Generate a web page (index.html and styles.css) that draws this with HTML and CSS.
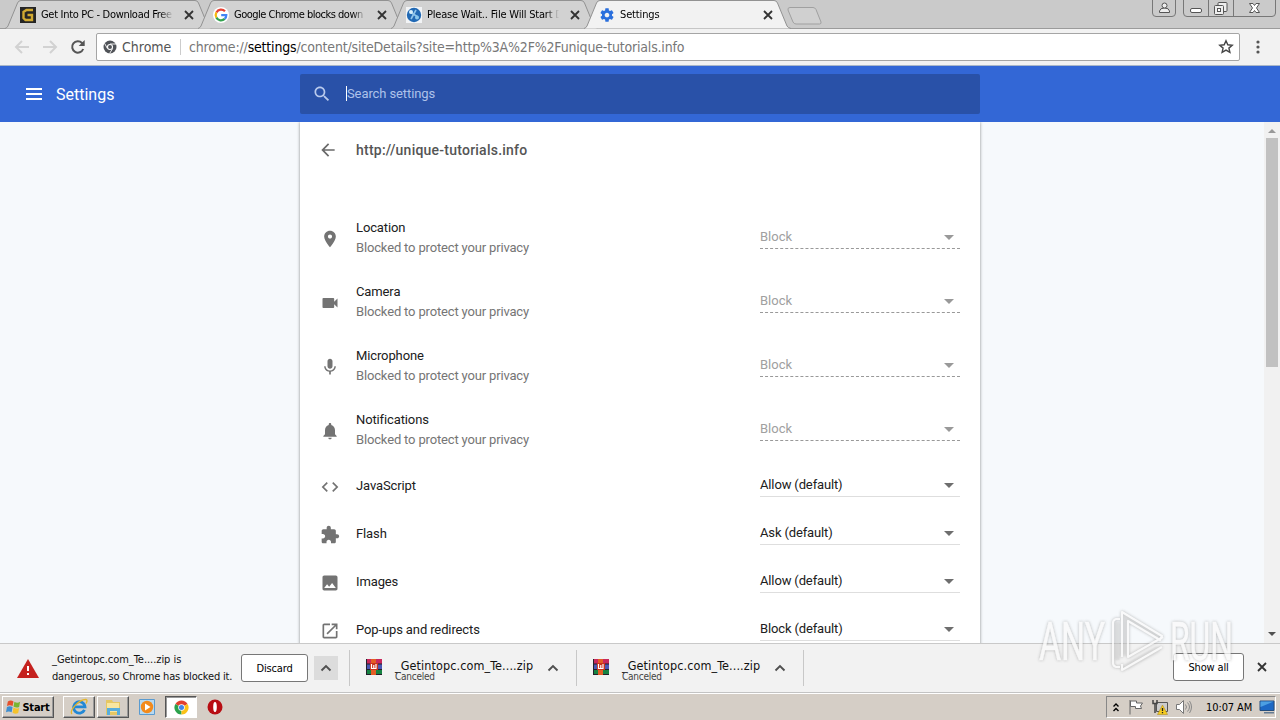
FILE: index.html
```html
<!DOCTYPE html>
<html lang="en">

<head>
    <meta charset="UTF-8" />
    <meta name="viewport" content="width=device-width, initial-scale=1.0" />
    <title>Settings</title>
    <link rel="stylesheet" href="styles.css">
</head>

<body>
    <svg class="defs" width="0" height="0">
        <symbol id="close" viewBox="0 0 10 10">
            <path d="M1 1l8 8M9 1l-8 8" fill="none" stroke="currentColor" stroke-width="1.8" />
        </symbol>
        <symbol id="up" viewBox="0 0 12 8">
            <path d="M1.5 6.5L6 2l4.5 4.5" fill="none" stroke="#505050" stroke-width="1.9" />
        </symbol>
        <symbol id="tab-shape" viewBox="0 0 208 29">
            <path d="M0 28.500Q2 28 3 26L12.500 3Q13.500 .5 16 .5H190Q192.500 .5 193.500 3L203 26Q204 28 207 28.500" stroke="#929292" />
        </symbol>
        <symbol id="winrar" viewBox="0 0 16 16">
            <path fill="#c9285c" d="M0 0h16v5H0z" />
            <path fill="#4b58b5" d="M0 5h16v6H0z" />
            <path fill="#168242" d="M0 11h16v5H0z" />
            <path fill="#23202b" d="M0 4.500h16v1H0zM0 10h16v1H0zM0 15h16v1H0zM0 0h1v16H0z" />
            <path fill="#e45d25" d="M5 0h5v16H5z" />
            <path fill="#c8331d" d="M4 4h8v7H4z" />
            <path d="M5.500 5v4.500h4.500V5M7.800 6v3" fill="none" stroke="#fff" stroke-width="1.2" />
        </symbol>
    </svg>

    <div class="window">
        <div class="tabs">
            <div class="tab">
                <svg class="shape"><use href="#tab-shape" /></svg>
                <svg class="favicon" viewBox="0 0 16 16">
                    <path fill="#252525" d="M0 0h16v16H0z" />
                    <path d="M13 3H6.500L3.500 5v6l2 2H12V8H7.500" fill="none" stroke="#d1a931" stroke-width="2.400" />
                </svg>
                <span class="tab-title t1">Get Into PC - Download Free</span>
                <svg class="x"><use href="#close" /></svg>
            </div>
            <div class="tab">
                <svg class="shape"><use href="#tab-shape" /></svg>
                <svg class="favicon" viewBox="0 0 16 16">
                    <circle cx="8" cy="8" r="8" fill="#fff" />
                    <g fill="none" stroke-width="2.200">
                        <path d="M12 4.300A5.300 5.300 0 0 0 3.400 5.400" stroke="#e64335" />
                        <path d="M3.400 5.400a5.300 5.300 0 0 0 0 5.200" stroke="#f6b90c" />
                        <path d="M3.400 10.600a5.300 5.300 0 0 0 8.300 1.300" stroke="#34a350" />
                        <path d="M11.700 11.900A5.300 5.300 0 0 0 13.300 8.200H8.200" stroke="#4285f4" />
                    </g>
                </svg>
                <span class="tab-title t2">Google Chrome blocks down</span>
                <svg class="x"><use href="#close" /></svg>
            </div>
            <div class="tab">
                <svg class="shape"><use href="#tab-shape" /></svg>
                <svg class="favicon" viewBox="0 0 16 16">
                    <path fill="#f2f4f6" d="M0 0h16v16H0z" />
                    <circle cx="8" cy="8" r="7.200" fill="#2169b4" />
                    <path d="M4 5l8 5M10 3L5 12" stroke="#8fc4ea" stroke-width="1.600" />
                    <circle cx="5" cy="5" r="2" fill="#d7effa" />
                    <circle cx="11" cy="10.500" r="2" fill="#8bc7eb" />
                </svg>
                <span class="tab-title t3">Please Wait.. File Will Start D</span>
                <svg class="x"><use href="#close" /></svg>
            </div>
            <div class="tab active">
                <svg class="shape"><use href="#tab-shape" /></svg>
                <svg class="favicon" viewBox="0 0 24 24">
                    <path fill="#2a6fdd" d="M19.430 12.980c.04-.32.07-.64.07-.98s-.03-.66-.07-.98l2.110-1.650c.19-.15.24-.42.12-.64l-2-3.460c-.12-.22-.39-.3-.61-.22l-2.490 1c-.52-.4-1.080-.73-1.690-.98l-.38-2.650C14.460 2.180 14.250 2 14 2h-4c-.25 0-.46.18-.49.42l-.38 2.650c-.61.25-1.170.59-1.690.98l-2.490-1c-.23-.09-.49 0-.61.22l-2 3.460c-.13.22-.07.49.12.64l2.110 1.650c-.04.32-.07.65-.07.98s.03.66.07.98l-2.110 1.650c-.19.15-.24.42-.12.64l2 3.460c.12.22.39.3.61.22l2.490-1c.52.4 1.080.73 1.690.98l.38 2.650c.03.24.24.42.49.42h4c.25 0 .46-.18.49-.42l.38-2.650c.61-.25 1.170-.59 1.690-.98l2.490 1c.23.09.49 0 .61-.22l2-3.460c.12-.22.07-.49-.12-.64l-2.110-1.650zM12 15.500c-1.930 0-3.500-1.570-3.500-3.500s1.570-3.500 3.500-3.500 3.500 1.570 3.500 3.500-1.570 3.500-3.500 3.500z" />
                </svg>
                <span class="tab-title t4">Settings</span>
                <svg class="x"><use href="#close" /></svg>
            </div>
            <svg class="new-tab" viewBox="0 0 36 18">
                <path d="M3 .5H26Q28 .5 29 2.500L34 15Q34.500 17 32.500 17H9Q7 17 6 15L1 3Q.5 .5 3 .5z" fill="#d0d0d0" stroke="#a0a0a0" />
            </svg>
            <div class="win-buttons">
                <svg class="user" viewBox="0 0 24 17">
                    <path d="M.5 0V13Q.5 16.500 4 16.500H20Q23.500 16.500 23.500 13V0" />
                    <g fill="#eee" stroke="#555">
                        <path d="M7.500 12.500v-1.500q.5-3 5-3t5 3v1.500z" />
                        <circle cx="12.500" cy="5.500" r="2.500" />
                    </g>
                </svg>
                <svg class="controls" viewBox="0 0 93 17">
                    <path d="M.5 0V13Q.5 16.500 4 16.500H89Q92.500 16.500 92.500 13V0M25.500 0V16M50.500 0V16" />
                    <g stroke="#555">
                        <rect x="7.500" y="8.500" width="11" height="4" rx="1.500" fill="#fff" />
                        <rect x="35" y="2.500" width="9" height="9" rx="1" fill="#eee" />
                        <rect x="31.500" y="5.500" width="9" height="9" rx="1" fill="#eee" />
                        <rect x="34.500" y="8.500" width="3" height="3" fill="#fff" />
                        <path d="M66.500 3.500h3.500l1.500 2 1.500-2h3.500L73.500 8l3 4.500H73l-1.500-2-1.500 2h-3.500l3-4.500z" fill="#fff" />
                    </g>
                </svg>
            </div>
        </div>

        <div class="toolbar">
            <svg class="nav" viewBox="0 0 16 16"><path d="M15 8H2M8 2L2 8l6 6" stroke="#d2d2d2" /></svg>
            <svg class="nav" viewBox="0 0 16 16"><path d="M1 8h13M8 2l6 6-6 6" stroke="#d2d2d2" /></svg>
            <svg class="nav" viewBox="0 0 16 16">
                <path d="M13.200 10A5.700 5.700 0 1 1 12 4L13.600 5.600" stroke="#555" />
                <path d="M14.700 1v6H8.700z" fill="#555" stroke="none" />
            </svg>
            <div class="omnibox">
                <svg class="chrome-icon" viewBox="0 0 14 14">
                    <circle cx="7" cy="7" r="6.500" fill="#505358" />
                    <path d="M7 4h6M4.400 8.500L1.700 3.500M9.600 8.500L6.600 13.500" stroke="#fff" stroke-width=".9" />
                    <circle cx="7" cy="7" r="2.500" fill="#505358" stroke="#fff" stroke-width="1.100" />
                </svg>
                <span class="chip">Chrome</span>
                <span class="url">chrome://<b>settings</b>/content/siteDetails?site=http%3A%2F%2Funique-tutorials.info</span>
                <svg class="star" viewBox="0 0 16 16">
                    <path d="M8 1.800l1.800 4 4.400.4-3.300 2.900 1 4.300L8 11.100l-3.900 2.300 1-4.300-3.300-2.900 4.400-.4z" fill="none" stroke="#454545" stroke-width="1.400" />
                </svg>
            </div>
            <svg class="more" viewBox="0 0 4 14">
                <circle cx="2" cy="2" r="1.600" /><circle cx="2" cy="7" r="1.600" /><circle cx="2" cy="12" r="1.600" />
            </svg>
        </div>

        <div class="header">
            <div class="brand">
                <svg class="menu" viewBox="0 0 16 12"><path d="M0 1h16M0 6h16M0 11h16" stroke="#fff" stroke-width="2" /></svg>
                <h1>Settings</h1>
            </div>
            <div class="search">
                <svg viewBox="0 0 24 24"><path d="M15.500 14h-.79l-.28-.27C15.410 12.590 16 11.110 16 9.500 16 5.910 13.090 3 9.500 3S3 5.910 3 9.500 5.910 16 9.500 16c1.610 0 3.090-.59 4.230-1.570l.27.28v.79l5 4.990L20.490 19l-4.990-5zm-6 0C7.010 14 5 11.990 5 9.500S7.010 5 9.500 5 14 7.010 14 9.500 11.990 14 9.500 14z" /></svg>
                <span>Search settings</span>
            </div>
        </div>

        <div class="page">
            <div class="card">
                <div class="site">
                    <svg viewBox="0 0 24 24"><path d="M20 11H7.830l5.590-5.590L12 4l-8 8 8 8 1.410-1.410L7.830 13H20v-2z" /></svg>
                    <h2>http://unique-tutorials.info</h2>
                </div>
                <div class="row blocked">
                    <svg class="icon" viewBox="0 0 24 24"><path d="M12 2C8.130 2 5 5.130 5 9c0 5.250 7 13 7 13s7-7.750 7-13c0-3.870-3.130-7-7-7zm0 9.500c-1.380 0-2.500-1.120-2.500-2.500s1.120-2.500 2.500-2.500 2.500 1.120 2.500 2.500-1.120 2.500-2.500 2.500z" /></svg>
                    <div class="label"><p>Location</p><small>Blocked to protect your privacy</small></div>
                    <div class="select"><span>Block</span><i></i></div>
                </div>
                <div class="row blocked">
                    <svg class="icon" viewBox="0 0 24 24"><path d="M17 10.500V7c0-.55-.45-1-1-1H4c-.55 0-1 .45-1 1v10c0 .55.45 1 1 1h12c.55 0 1-.45 1-1v-3.500l4 4v-11l-4 4z" /></svg>
                    <div class="label"><p>Camera</p><small>Blocked to protect your privacy</small></div>
                    <div class="select"><span>Block</span><i></i></div>
                </div>
                <div class="row blocked">
                    <svg class="icon" viewBox="0 0 24 24"><path d="M12 14c1.660 0 2.990-1.340 2.990-3L15 5c0-1.660-1.340-3-3-3S9 3.340 9 5v6c0 1.660 1.340 3 3 3zm5.300-3c0 3-2.540 5.100-5.300 5.100S6.700 14 6.700 11H5c0 3.410 2.720 6.230 6 6.720V21h2v-3.280c3.280-.48 6-3.300 6-6.720h-1.700z" /></svg>
                    <div class="label"><p>Microphone</p><small>Blocked to protect your privacy</small></div>
                    <div class="select"><span>Block</span><i></i></div>
                </div>
                <div class="row blocked">
                    <svg class="icon" viewBox="0 0 24 24"><path d="M12 22c1.100 0 2-.9 2-2h-4c0 1.100.89 2 2 2zm6-6v-5c0-3.070-1.640-5.640-4.500-6.320V4c0-.83-.67-1.500-1.500-1.500s-1.500.67-1.500 1.500v.68C7.630 5.360 6 7.920 6 11v5l-2 2v1h16v-1l-2-2z" /></svg>
                    <div class="label"><p>Notifications</p><small>Blocked to protect your privacy</small></div>
                    <div class="select"><span>Block</span><i></i></div>
                </div>
                <div class="row">
                    <svg class="icon" viewBox="0 0 24 24"><path d="M9.400 16.600L4.800 12l4.600-4.600L8 6l-6 6 6 6 1.400-1.400zm5.200 0l4.600-4.600-4.600-4.600L16 6l6 6-6 6-1.400-1.400z" /></svg>
                    <div class="label"><p>JavaScript</p></div>
                    <div class="select"><span>Allow (default)</span><i></i></div>
                </div>
                <div class="row">
                    <svg class="icon" viewBox="0 0 24 24"><path d="M20.500 11H19V7c0-1.100-.9-2-2-2h-4V3.500C13 2.120 11.880 1 10.500 1S8 2.120 8 3.500V5H4c-1.100 0-1.990.9-1.990 2v3.800H3.500c1.490 0 2.700 1.210 2.700 2.700s-1.210 2.700-2.700 2.700H2V20c0 1.100.9 2 2 2h3.800v-1.500c0-1.490 1.210-2.700 2.700-2.700 1.490 0 2.700 1.210 2.700 2.700V22H17c1.100 0 2-.9 2-2v-4h1.500c1.380 0 2.500-1.120 2.500-2.500S21.880 11 20.500 11z" /></svg>
                    <div class="label"><p>Flash</p></div>
                    <div class="select"><span>Ask (default)</span><i></i></div>
                </div>
                <div class="row">
                    <svg class="icon" viewBox="0 0 24 24"><path d="M21 19V5c0-1.100-.9-2-2-2H5c-1.100 0-2 .9-2 2v14c0 1.100.9 2 2 2h14c1.100 0 2-.9 2-2zM8.500 13.500l2.500 3.010L14.500 12l4.500 6H5l3.500-4.500z" /></svg>
                    <div class="label"><p>Images</p></div>
                    <div class="select"><span>Allow (default)</span><i></i></div>
                </div>
                <div class="row">
                    <svg class="icon" viewBox="0 0 24 24"><path d="M19 19H5V5h7V3H5c-1.110 0-2 .9-2 2v14c0 1.100.89 2 2 2h14c1.100 0 2-.9 2-2v-7h-2v7zM14 3v2h3.590l-9.830 9.830 1.410 1.410L19 6.410V10h2V3h-7z" /></svg>
                    <div class="label"><p>Pop-ups and redirects</p></div>
                    <div class="select"><span>Block (default)</span><i></i></div>
                </div>
            </div>
            <div class="scrollbar">
                <i class="arrow-up"></i>
                <div class="thumb"></div>
                <i class="arrow-down"></i>
            </div>
        </div>

        <div class="shelf">
            <div class="download danger">
                <svg class="warning" viewBox="0 0 22 19">
                    <path d="M11 0l11 19H0z" fill="#c5221f" />
                    <path d="M10 7h2v5h-2zM10 14h2v2h-2z" fill="#fff" />
                </svg>
                <p><span>_Getintopc.com_Te....zip is</span><br><span class="l2">dangerous, so Chrome has blocked it.</span></p>
                <button class="discard">Discard</button>
                <div class="chevron"><svg><use href="#up" /></svg></div>
            </div>
            <div class="download">
                <svg class="rar"><use href="#winrar" /></svg>
                <div class="file"><p>_Getintopc.com_Te....zip</p><small>Canceled</small></div>
                <svg class="caret"><use href="#up" /></svg>
            </div>
            <div class="download">
                <svg class="rar"><use href="#winrar" /></svg>
                <div class="file"><p>_Getintopc.com_Te....zip</p><small>Canceled</small></div>
                <svg class="caret"><use href="#up" /></svg>
            </div>
            <button class="show-all">Show all</button>
            <svg class="x"><use href="#close" /></svg>
        </div>

        <div class="taskbar">
            <div class="task start">
                <svg viewBox="0 0 16 16">
                    <path d="M2 2q3-2 6 0L7 7Q4 5.500 1 7z" fill="#e5502b" />
                    <path d="M9 2.500q3 2 6 0L14 8q-3 1.500-6-.5z" fill="#79b530" />
                    <path d="M1 8q3-1.500 6 0l-1 5.500q-3-1.500-6 0z" fill="#3e8ed0" />
                    <path d="M8 8.500q3 2 6 .5l-1 5.500q-3 1.500-6-.5z" fill="#f5c32b" />
                </svg>
                <span>Start</span>
            </div>
            <div class="task">
                <svg viewBox="0 0 18 18">
                    <path d="M14.500 11.800A5.700 5.700 0 1 1 15 8.800H5" fill="none" stroke="#2388d5" stroke-width="2.800" />
                    <path d="M2 16C-1 13 9 1 16 1.500c2 .5.500 3 0 4" fill="none" stroke="#e4b52a" stroke-width="1.300" />
                </svg>
            </div>
            <div class="task">
                <svg viewBox="0 0 18 18">
                    <path d="M2 2h6l1 2h7v13H2z" fill="#e6c763" />
                    <path d="M3 5h12v9H3z" fill="#f8e6a0" />
                    <path d="M3 10h13v7h-3v-4H6v4H3z" fill="#58addc" />
                </svg>
            </div>
            <div class="task flat">
                <svg viewBox="0 0 18 18">
                    <path d="M1.500 1.500h15v15h-15z" fill="#b7d9f1" stroke="#5a9bd0" />
                    <circle cx="9" cy="9" r="6.200" fill="#f28a1c" />
                    <path d="M7 5.500v7L12.500 9z" fill="#fff" />
                </svg>
            </div>
            <div class="task current">
                <svg viewBox="0 0 16 16">
                    <path d="M8 8L1.500 4.200A7.500 7.500 0 0 1 14.500 4.200z" fill="#e2402f" />
                    <path d="M8 8L1.500 4.200A7.500 7.500 0 0 0 8 15.500z" fill="#2ba24c" />
                    <path d="M8 8l6.500-3.800A7.500 7.500 0 0 1 8 15.500z" fill="#fbc116" />
                    <circle cx="8" cy="8" r="3.500" fill="#fff" />
                    <circle cx="8" cy="8" r="2.700" fill="#4285e8" />
                </svg>
            </div>
            <div class="task flat">
                <svg viewBox="0 0 18 18">
                    <circle cx="9" cy="9" r="7.500" fill="#b80d13" />
                    <ellipse cx="9" cy="9" rx="1.800" ry="5" fill="#fff" />
                </svg>
            </div>
            <div class="tray">
                <svg class="expand" viewBox="0 0 8 10"><path d="M1.500 4.500L4 2l2.500 2.500M1.500 9L4 6.500 6.500 9" fill="none" stroke="#000" stroke-width="1.400" /></svg>
                <svg class="flag" viewBox="0 0 16 16"><path d="M2 1v14.500M2.500 2h6v2h6l-2 3 1 2.500h-6v-2h-5z" fill="#fff" stroke="#666" /></svg>
                <svg class="net" viewBox="0 0 16 16">
                    <path d="M4.500 3.500h11v9h-11z" fill="#ccc" stroke="#555" />
                    <path d="M1 1v3.500h4V1M3 4.500V14" fill="none" stroke="#444" stroke-width="1.500" />
                    <path d="M10.500 6l5 9.500h-10z" fill="#f5cb20" stroke="#a68310" stroke-width=".5" />
                    <path d="M10.500 9v3M10.500 13v1.200" stroke="#222" stroke-width="1.300" />
                </svg>
                <svg class="sound" viewBox="0 0 16 16">
                    <path d="M.5 5.500h3l4-4v13l-4-4h-3z" fill="#fff" stroke="#777" />
                    <path d="M9.500 5.500q2 2.500 0 5M11.500 3.500q4 4.500 0 9M13.500 2q4 6 0 12" fill="none" stroke="#888" />
                </svg>
                <span>10:07 AM</span>
                <svg class="screen" viewBox="0 0 16 14">
                    <path d="M1 1h14v9.500H1z" fill="#1d68c4" stroke="#244d7d" />
                    <path d="M1.500 1.500h13L1.500 7z" fill="#4c9fe2" />
                    <path d="M5 12h10v1.500H5z" fill="#657b92" />
                </svg>
            </div>
        </div>

        <svg class="watermark" viewBox="0 0 200 70">
            <g class="mark-text">
                <text x="3" y="53" textLength="66" lengthAdjust="spacingAndGlyphs">ANY</text>
                <text x="134" y="53" textLength="63" lengthAdjust="spacingAndGlyphs">RUN</text>
            </g>
            <path class="mark-edge" d="M81 53V15M90 48V10l32 20M90 60l32-18" />
            <path class="mark-line" d="M84 12h-4q-3 1-3 4v40q0 3 3 4h4M86 50V5l40 24-2 4-32-19v36l35-20M86 57v6l40-23" />
        </svg>
    </div>
</body>

</html>
```

FILE: styles.css
```css
* {
    margin: 0;
    padding: 0;
    box-sizing: border-box;
}

body {
    font-family: Roboto, sans-serif;
    font-size: 13px;
    overflow: hidden;
}

svg {
    display: block;
    flex: none;
}

.defs {
    position: absolute;
}

.window {
    position: relative;
    width: 1280px;
    height: 720px;
    display: flex;
    flex-direction: column;
}

/* tab strip */
.tabs {
    height: 29px;
    display: flex;
    padding-left: 5px;
    background: #cacaca;
    border-bottom: 1px solid #9b9b9b;
    font-family: "DejaVu Sans Condensed", "DejaVu Sans", sans-serif;
    font-size: 11px;
}

.tab {
    position: relative;
    width: 208px;
    height: 29px;
    margin-right: -15px;
    padding: 0 19px 0 15px;
    display: flex;
    align-items: center;
    flex: none;
}

.tab .shape {
    position: absolute;
    left: 0;
    top: 0;
    width: 208px;
    height: 29px;
    fill: #d2d2d2;
}

.tab.active .shape {
    fill: #f2f2f2;
}

.favicon {
    position: relative;
    width: 16px;
    height: 16px;
}

.tab-title {
    position: relative;
    flex: 1;
    margin: 0 8px 0 5px;
    overflow: hidden;
    white-space: nowrap;
    mask-image: linear-gradient(to right, #000 88%, transparent 98%);
}

.t1 {
    letter-spacing: -0.3px;
}

.t2 {
    letter-spacing: -0.5px;
}

.t3 {
    letter-spacing: -0.2px;
}

.t4 {
    letter-spacing: -0.15px;
}

.x {
    position: relative;
    width: 10px;
    height: 10px;
    color: #333;
}

.new-tab {
    width: 36px;
    height: 18px;
    margin: 7px 0 0 10px;
}

.win-buttons {
    display: flex;
    gap: 7px;
    margin: 0 4px 0 auto;
    fill: none;
    stroke: #777;
}

.user {
    width: 24px;
    height: 17px;
}

.controls {
    width: 93px;
    height: 17px;
}

/* toolbar */
.toolbar {
    height: 37px;
    display: flex;
    align-items: center;
    padding-left: 14px;
    background: #f2f2f2;
    border-bottom: 1px solid #a9b7c9;
}

.nav {
    width: 16px;
    height: 16px;
    margin-right: 12px;
    fill: none;
    stroke-width: 2;
}

.omnibox {
    width: 1144px;
    height: 28px;
    margin-left: -2px;
    display: flex;
    align-items: center;
    padding: 0 5px 0 6px;
    background: #fff;
    border: 1px solid #a5a5a5;
    border-radius: 2px;
    font-family: "DejaVu Sans Condensed", "DejaVu Sans", sans-serif;
    font-weight: 200;
    font-size: 14px;
    color: #777;
}

.chrome-icon {
    width: 14px;
    height: 14px;
}

.chip {
    width: 59px;
    margin-left: 5px;
    color: #555;
    border-right: 1px solid #ccc;
}

.url {
    margin-left: 8px;
    letter-spacing: -0.18px;
}

.url b {
    font-weight: inherit;
    color: #000;
}

.star {
    width: 16px;
    height: 16px;
    margin-left: auto;
}

.more {
    width: 4px;
    height: 14px;
    margin-left: 16px;
    fill: #555;
}

/* settings header */
.header {
    height: 56px;
    display: flex;
    align-items: center;
    background: #3367d6;
    color: #fff;
}

.brand {
    width: 300px;
    display: flex;
    align-items: center;
    gap: 14px;
    padding-left: 26px;
}

.menu {
    width: 16px;
    height: 12px;
}

h1 {
    font-size: 16px;
    font-weight: 400;
}

.search {
    width: 680px;
    height: 40px;
    display: flex;
    align-items: center;
    padding-left: 12px;
    background: #2951a8;
    border-radius: 2px;
    color: #adc2ea;
}

.search svg {
    width: 20px;
    height: 20px;
    fill: #b9caed;
}

.search span {
    margin: 0 0 1px 14px;
    border-left: 1px solid #fff;
    letter-spacing: -0.1px;
}

/* site permissions */
.page {
    height: 521px;
    display: flex;
    background: #f6f9fc;
    overflow: hidden;
}

.card {
    width: 680px;
    height: 560px;
    flex: none;
    margin-left: 300px;
    padding: 0 20px;
    background: #fff;
    box-shadow: 0 0 3px rgba(0, 0, 0, .45);
}

.site {
    height: 84px;
    display: flex;
    padding-top: 18px;
}

.site svg {
    width: 20px;
    height: 20px;
    margin-left: -2px;
    fill: #6a6a6a;
}

h2 {
    margin-left: 18px;
    font-size: 14px;
    font-weight: 500;
    line-height: 20px;
    letter-spacing: 0.23px;
    color: #555;
}

.row {
    height: 48px;
    display: flex;
    align-items: center;
}

.row.blocked {
    height: 64px;
}

.icon {
    width: 20px;
    height: 20px;
    margin-top: 2px;
    fill: #737373;
}

.label {
    flex: 1;
    margin-left: 16px;
    line-height: 20px;
    letter-spacing: -0.12px;
    color: #202020;
}

.label small {
    display: block;
    font-size: 13px;
    letter-spacing: -0.16px;
    color: #757575;
}

.select {
    width: 200px;
    height: 22px;
    display: flex;
    align-items: center;
    justify-content: space-between;
    padding: 0 6px 2px 0;
    border-bottom: 1px solid #dedede;
    letter-spacing: -0.14px;
    color: #202020;
}

.select i {
    margin-top: 1px;
    border: 5px solid transparent;
    border-top-color: #6e6e6e;
    border-bottom: 0;
}

.blocked .select {
    border-bottom: 1px dashed #999;
    letter-spacing: 0;
    color: #a0a0a0;
}

.blocked .select i {
    border-top-color: #999;
}

.scrollbar {
    width: 16px;
    margin-left: auto;
    display: flex;
    flex-direction: column;
    align-items: center;
    background: #f1f1f1;
}

.thumb {
    width: 12px;
    height: 229px;
    margin-top: 5px;
    background: #c1c1c1;
}

.arrow-up {
    margin-top: 7px;
    border: 4px solid transparent;
    border-bottom-color: #999;
    border-top: 0;
}

.arrow-down {
    margin: auto 0 7px;
    border: 4px solid transparent;
    border-top-color: #505050;
    border-bottom: 0;
}

/* download shelf */
.shelf {
    height: 50px;
    display: flex;
    align-items: center;
    background: #f2f2f2;
    border-top: 1px solid #c9c9c9;
    border-bottom: 1px solid #c3c3c3;
    font-family: "DejaVu Sans Condensed", "DejaVu Sans", sans-serif;
    font-size: 11px;
    color: #111;
}

.download {
    width: 227px;
    height: 36px;
    display: flex;
    align-items: center;
    padding-left: 16px;
    border-right: 1px solid #c8c8c8;
}

.danger {
    width: 350px;
    padding-left: 17px;
    line-height: 17px;
}

.danger p {
    width: 189px;
    margin-left: 13px;
    letter-spacing: -0.05px;
    white-space: nowrap;
}

.warning {
    width: 22px;
    height: 19px;
}

.danger .l2 {
    letter-spacing: -0.18px;
}

button {
    height: 28px;
    font: inherit;
    letter-spacing: -0.15px;
    color: #000;
    background: #fff;
    border: 1px solid #777;
    border-radius: 3px;
}

.discard {
    width: 67px;
}

.chevron {
    width: 24px;
    height: 24px;
    margin-left: 6px;
    display: flex;
    align-items: center;
    justify-content: center;
    background: #dcdcdc;
}

.chevron svg,
.caret {
    width: 12px;
    height: 8px;
}

.rar {
    width: 16px;
    height: 16px;
    margin-bottom: 2px;
}

.file {
    width: 141px;
    margin: 3px 11px 0 13px;
    white-space: nowrap;
}

.file p {
    font-size: 12.5px;
    line-height: 13px;
    letter-spacing: 0.1px;
}

.file small {
    display: block;
    font-size: 10px;
    line-height: 9px;
    letter-spacing: -0.25px;
    color: #444;
}

.show-all {
    width: 71px;
    margin: 0 0 2px auto;
}

.shelf .x {
    margin: 0 13px 2px;
}

/* taskbar */
.taskbar {
    height: 27px;
    display: flex;
    align-items: center;
    padding: 0 4px 0 2px;
    border-top: 1px solid #fff;
    background: #d5cec6;
    font-family: "DejaVu Sans Condensed", "DejaVu Sans", sans-serif;
    font-size: 11px;
}

.task {
    width: 32px;
    height: 22px;
    margin-right: 2px;
    display: flex;
    align-items: center;
    justify-content: center;
    border: 1px solid;
    border-color: #fff #555 #555 #fff;
    box-shadow: inset -1px -1px #999;
}

.task svg {
    width: 18px;
    height: 18px;
}

.start {
    width: 52px;
    margin-right: 9px;
    font-weight: bold;
    letter-spacing: -0.2px;
}

.start svg {
    width: 15px;
    height: 16px;
    margin-right: 1px;
}

.flat {
    border-color: transparent;
    box-shadow: none;
}

.current {
    background: #fff;
    border-color: #555 #fff #fff #555;
    box-shadow: inset 1px 1px #999;
}

.current svg {
    width: 15px;
    height: 15px;
}

.tray {
    width: 170px;
    height: 22px;
    margin-left: auto;
    display: flex;
    align-items: center;
    padding-left: 5px;
    border: 1px solid;
    border-color: #888 #fff #fff #888;
    white-space: nowrap;
}

.expand {
    width: 8px;
    height: 10px;
}

.flag,
.net,
.sound {
    width: 16px;
    height: 16px;
    margin-left: 8px;
}

.tray span {
    width: 48px;
    margin-left: 14px;
    letter-spacing: -0.1px;
}

.screen {
    width: 16px;
    height: 14px;
    margin-left: 5px;
}

/* watermark lies over the page and the shelf */
.watermark {
    position: absolute;
    left: 1036px;
    top: 607px;
    width: 200px;
    height: 70px;
    opacity: .8;
    filter: drop-shadow(0 0 1.5px rgba(110, 110, 110, .6));
}

.mark-text {
    font-family: Roboto, sans-serif;
    font-size: 53px;
    fill: #fafafa;
    stroke: #fafafa;
    stroke-width: .6;
}

.mark-line {
    fill: none;
    stroke: #fafafa;
    stroke-width: 2.2;
    stroke-linejoin: round;
}

.mark-edge {
    fill: none;
    stroke: #d5d5d5;
    stroke-width: 5;
    opacity: .5;
}
```
